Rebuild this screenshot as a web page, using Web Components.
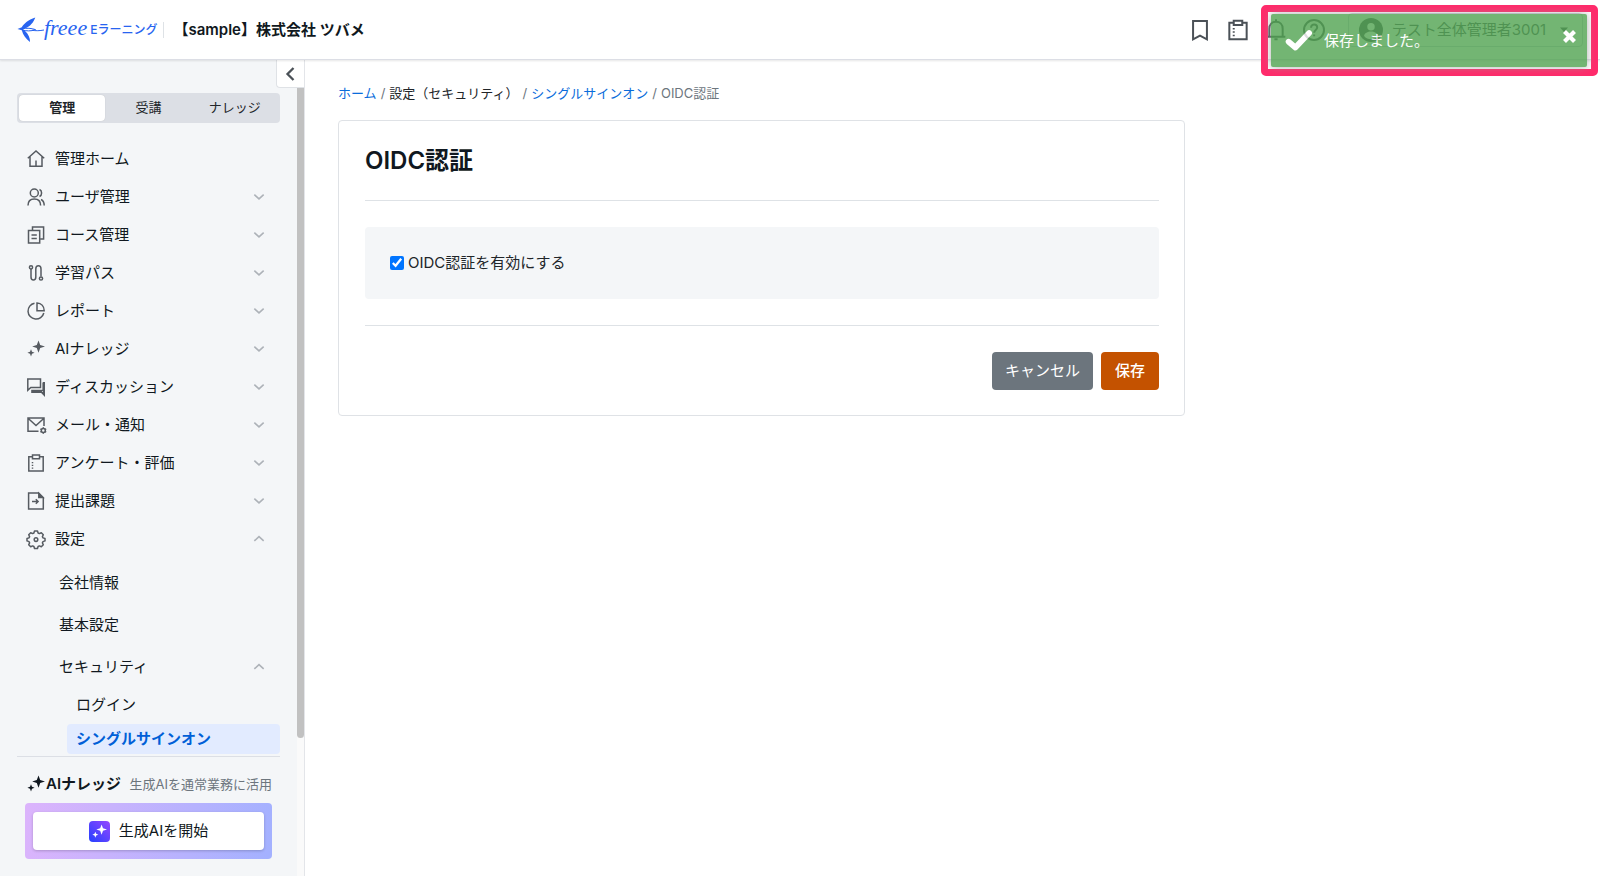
<!DOCTYPE html>
<html lang="ja">
<head>
<meta charset="utf-8">
<meta name="viewport" content="width=device-width, initial-scale=1">
<title>OIDC認証 | freee Eラーニング</title>
<style>
    * { box-sizing: border-box; }
    html, body { height: 100%; margin: 0; }
    body {
        font-family: Inter, "Noto Sans CJK JP", sans-serif;
        font-size: 15px;
        line-height: 22px;
        color: #212529;
        background: #fff;
    }
</style>
</head>
<body>
<app-layout>
    <app-header slot="header" company="【sample】株式会社 ツバメ" user="テスト全体管理者3001"></app-header>

    <side-bar slot="side">
        <mode-tabs slot="top"></mode-tabs>
        <nav-item icon="home" link>管理ホーム</nav-item>
        <nav-item icon="users">ユーザ管理</nav-item>
        <nav-item icon="copy">コース管理</nav-item>
        <nav-item icon="path">学習パス</nav-item>
        <nav-item icon="pie">レポート</nav-item>
        <nav-item icon="sparkle">AIナレッジ</nav-item>
        <nav-item icon="chat">ディスカッション</nav-item>
        <nav-item icon="mail">メール・通知</nav-item>
        <nav-item icon="clipboard">アンケート・評価</nav-item>
        <nav-item icon="submit">提出課題</nav-item>
        <nav-item icon="gear" open>設定</nav-item>
        <nav-item level="2" link>会社情報</nav-item>
        <nav-item level="2" link>基本設定</nav-item>
        <nav-item level="2" open>セキュリティ</nav-item>
        <nav-item level="3" link>ログイン</nav-item>
        <nav-item level="3" link current>シングルサインオン</nav-item>
        <ai-promo slot="bottom"></ai-promo>
    </side-bar>

    <bread-crumb>
        <crumb-item href="#home">ホーム</crumb-item>
        <crumb-item>設定（セキュリティ）</crumb-item>
        <crumb-item href="#sso">シングルサインオン</crumb-item>
        <crumb-item last>OIDC認証</crumb-item>
    </bread-crumb>
    <form-card heading="OIDC認証">
        <check-field>OIDC認証を有効にする</check-field>
        <action-button slot="actions">キャンセル</action-button>
        <action-button slot="actions" primary>保存</action-button>
    </form-card>
</app-layout>
<highlight-frame>
    <toast-message>保存しました。</toast-message>
</highlight-frame>

<script>
// All icons share an 18 x 18 grid
const ICONS = {
    home: '<path d="M.8 8.300 9 1l8.200 7.300M3 6.500V16.300H15V6.500M9 16V10.500"/>',
    users: '<circle cx="7.300" cy="5" r="4"/><path d="M1 17.500c0-4 2.500-6.500 6.300-6.500s6.300 2.500 6.300 6.500M12.500 1.500c2.800 1 2.800 5.800 0 7M14 11.500c2 1 3.200 3 3.200 6"/>',
    copy: '<path d="M5.500 3.800V1H16.600V13H13.500M1.500 4.400H12.700V17H1.500zM4.500 9H9.800M4.500 12.500H9.800"/>',
    path: '<circle cx="4" cy="3.300" r="1.600"/><path d="M4 5v8c0 4 4.800 4 4.800 0V5c0-4.300 5.200-4.300 5.200 0v7.500"/><circle cx="14" cy="14.500" r="1.600"/>',
    pie: '<path d="M7.500 1.200A8 8 0 1 0 16.800 11"/><path d="M10 1v7.800h7.200C17.200 4.200 14.200 1.200 10 1z"/>',
    sparkle: '<g fill="currentColor" stroke="none"><path d="M11.500.5l1.700 4.500L18 6.500 13.200 8l-1.700 4.800L9.800 8 5.200 6.500 9.800 5z"/><path d="M4 9.300l1 2.500 2.600 1-2.600 1-1 2.600-1-2.600-2.600-1 2.600-1z"/></g>',
    chat: '<path d="M.8 1h12.700v8.500H3.800L.8 12.200z"/><path d="M17 4v12.500l-2.600-2.600H4.200" stroke-width="2"/><path d="M4.200 12.300H16V4.500" stroke-width="1.200"/>',
    mail: '<path d="M11.500 15.300H1V2H17v8M1.300 2.500 9 9.500l7.700-7"/><circle cx="16.300" cy="14.500" r="2"/><path d="M16.300 11.200v1.300M16.300 16.500v1.300M13.400 12.900l1.200.6M18 15.500l1.200.6M13.400 16.100l1.200-.6M18 13.500l1.200-.6"/>',
    clipboard: '<path d="M5.500 2.800H1.800V17H16.200V2.800H12.500M5.500 1h7v3.800h-7z"/><path d="M5.500 8v1.300M5.500 10.800v1.300M5.500 13.500v1.300"/>',
    submit: '<path d="M1.600 1H11.500l4.800 4.800V17H1.600z"/><path d="M11.800 1.300v4.200h4.200z" fill="currentColor"/><path d="M5 9.500h6M8.800 7.300l2.300 2.200-2.300 2.200"/>',
    gear: '<path d="M7.500 1h3l.6 2 1.300.6 1.900-.9 2 2-.9 1.900.6 1.300 2 .6v2.400l-2 .7-.6 1.300.9 1.900-2 2-1.900-.9-1.300.6-.6 1.900h-3l-.6-1.900-1.300-.6-1.900.9-2-2 .9-1.900-.6-1.300-2-.7V8.500l2-.6.6-1.300-.9-1.900 2-2 1.900.9L6.900 3z" stroke-linejoin="round"/><circle cx="9" cy="9.600" r="1.800"/>',
    bookmark: '<path d="M3.800 2.200H14.200V16L9 13.300 3.800 16z"/>',
    board: '<path d="M5.800 3.500H2.500V16H15.500V3.500H12.200M5.800 2h6.400v3.200H5.800z"/><path d="M5.800 7.500v1.100M5.800 10v1.100M5.800 12.500v1.100"/>',
    bell: '<path d="M2 14h14M4 14V8c0-3.200 2-5.200 5-5.200s5 2 5 5.200v6M9 1v1.500M7.800 16h2.400"/>',
    help: '<circle cx="9" cy="9" r="7.500"/><path d="M6.800 7.300c0-3.300 4.600-3 4.600-.2 0 1.800-2.300 2-2.300 4M9.100 12.300v1.300"/>',
    user: '<g stroke="none"><circle cx="9" cy="9" r="9" fill="currentColor"/><circle cx="9" cy="6.500" r="2.800" fill="#fff"/><path d="M3.800 13.500c.5-4.500 9.900-4.500 10.400 0-2.500 3.300-7.900 3.300-10.400 0z" fill="#fff"/></g>',
    down: '<path d="M3 6l6 5.500L15 6" stroke-width="2"/>',
    up: '<path d="M3 11.500 9 6l6 5.500" stroke-width="2"/>',
    back: '<path d="M11.500 3 5.500 9l6 6" stroke-width="2.300"/>',
    caret: '<path d="M5 6.500h8L9 11z" fill="currentColor" stroke="none"/>',
    check: '<path d="M1.800 9.500 6.500 13.500 16 3.500" stroke-width="4" stroke-linecap="round" stroke-linejoin="round"/>',
    close: '<path d="M3 3l12 12M15 3 3 15" stroke-width="5"/>'
};

function define(name, render) {
    customElements.define(name, class extends HTMLElement {
        constructor() {
            super();
            this.attachShadow({ mode: 'open' });
        }
        connectedCallback() {
            this.shadowRoot.innerHTML = '<style>*{box-sizing:border-box}:host{box-sizing:border-box}</style>' + render(this);
        }
    });
}

define('ui-icon', el => `
    <style>
        :host { display: block; flex: none; width: 18px; height: 18px; }
        svg { display: block; width: 100%; height: 100%; overflow: visible; }
    </style>
    <svg viewBox="0 0 18 18" fill="none" stroke="currentColor" stroke-width="1.5" aria-hidden="true">${ICONS[el.getAttribute('name')]}</svg>
`);

define('app-layout', () => `
    <style>
        :host { display: flex; flex-direction: column; height: 100vh; }
        .body { display: flex; flex: 1; min-height: 0; }
        main { flex: 1; min-width: 0; padding: 22px 32px 32px 33px; overflow: auto; }
    </style>
    <slot name="header"></slot>
    <div class="body">
        <slot name="side"></slot>
        <main><slot></slot></main>
    </div>
`);

define('brand-logo', () => `
    <style>
        :host { display: block; }
        a { display: flex; align-items: center; color: #2864f0; text-decoration: none; }
        svg { width: 27px; height: 26px; }
        .name { font: italic 22px/26px "Liberation Serif", serif; padding-bottom: 4px; }
        .product { font-size: 12px; line-height: 20px; font-weight: 500; margin-left: 3px; }
    </style>
    <a href="#top">
        <svg viewBox="0 0 27 26" fill="currentColor" aria-hidden="true">
            <path d="M18.300.5C11 3 6.500 7 4.800 10.300L.5 12l4.300 1.300C6 18 9 22 13 25c.2-4-1.500-8-5.200-11.300L6 12.300l2.500-1C13 9.500 16.500 5.500 18.300.5z"/>
            <path d="M5 12c5-1.300 9-.8 13.500.6C14 14.500 9 14 5 13M15 13.200c3.500.8 8 .6 12-.2" fill="none" stroke="currentColor" stroke-width="1"/>
        </svg>
        <span class="name">freee</span>
        <span class="product">Eラーニング</span>
    </a>
`);

define('app-header', el => `
    <style>
        :host {
            display: flex;
            align-items: center;
            flex: none;
            height: 60px;
            padding: 0 17px;
            background: #fff;
            border-bottom: 1px solid #dcdee5;
            box-shadow: 0 1px 2px rgba(0, 0, 0, .1);
            z-index: 1;
        }
        .company {
            border-left: 1px solid #dee2e6;
            margin-left: 6px;
            padding-left: 9px;
            line-height: 16px;
            font-weight: 600;
            color: #101820;
            white-space: nowrap;
        }
        .tools { display: flex; align-items: center; gap: 14px; margin-left: auto; color: #4b5157; }
        button { background: none; border: 0; padding: 0; font: inherit; color: inherit; }
        ui-icon { width: 24px; height: 24px; }
        .user {
            display: flex;
            align-items: center;
            gap: 9px;
            height: 34px;
            margin-left: 8px;
            padding: 0 9px 0 10px;
            border: 1px solid #ced4da;
            border-radius: 4px;
            white-space: nowrap;
        }
        .user ui-icon:last-child { width: 18px; height: 18px; }
    </style>
    <brand-logo></brand-logo>
    <div class="company">${el.getAttribute('company')}</div>
    <div class="tools">
        <button aria-label="ブックマーク"><ui-icon name="bookmark"></ui-icon></button>
        <button aria-label="アンケート"><ui-icon name="board"></ui-icon></button>
        <button aria-label="お知らせ"><ui-icon name="bell"></ui-icon></button>
        <button aria-label="ヘルプ"><ui-icon name="help"></ui-icon></button>
        <button class="user"><ui-icon name="user"></ui-icon>${el.getAttribute('user')}<ui-icon name="caret"></ui-icon></button>
    </div>
`);

define('side-bar', () => `
    <style>
        :host {
            display: flex;
            flex: none;
            width: 305px;
            background: #f4f6f8;
            border-right: 1px solid #e3e5e9;
        }
        .content { display: flex; flex-direction: column; flex: 1; min-width: 0; padding: 33px 0 17px 17px; }
        nav { flex: 1; min-height: 0; margin-top: 17px; overflow: hidden; }
        .rail { display: flex; flex-direction: column; align-items: flex-end; width: 24px; background: linear-gradient(to right, transparent 17px, #fafafa 17px); }
        button {
            width: 28px;
            height: 28px;
            padding: 5px;
            background: #fff;
            border: 1px solid #dfe2e6;
            border-width: 0 0 1px 1px;
            border-radius: 0 0 0 4px;
            color: #4b5157;
        }
        .thumb { width: 7px; height: 650px; max-height: 80%; background: #c1c1c1; border-radius: 0 0 4px 4px; }
    </style>
    <div class="content">
        <slot name="top"></slot>
        <nav><slot></slot></nav>
        <slot name="bottom"></slot>
    </div>
    <div class="rail">
        <button aria-label="メニューを閉じる"><ui-icon name="back"></ui-icon></button>
        <div class="thumb"></div>
    </div>
`);

define('mode-tabs', () => `
    <style>
        :host { display: flex; padding: 2px; background: #dcdfe5; border-radius: 4px; }
        button {
            flex: 1;
            height: 26px;
            padding: 0 0 2px;
            background: none;
            border: 0;
            border-radius: 4px;
            font: inherit;
            font-size: 13px;
            color: #212529;
        }
        button[aria-pressed="true"] { background: #fff; font-weight: 600; box-shadow: 0 0 1px rgba(0, 0, 0, .2); }
    </style>
    <button aria-pressed="true">管理</button>
    <button>受講</button>
    <button>ナレッジ</button>
`);

define('nav-item', el => {
    const tag = el.hasAttribute('link') ? 'a href="#"' : 'button';
    const end = el.hasAttribute('link') ? 'a' : 'button';
    const icon = el.getAttribute('icon');
    const open = el.hasAttribute('open');
    return `
    <style>
        :host { display: block; }
        a, button {
            display: flex;
            align-items: center;
            gap: 10px;
            width: 100%;
            height: 38px;
            padding: 0 14px 0 10px;
            background: none;
            border: 0;
            border-radius: 4px;
            font: inherit;
            color: #101820;
            text-align: left;
            text-decoration: none;
        }
        span { flex: 1; white-space: nowrap; }
        .icon { color: #565b61; }
        .arrow { width: 14px; height: 14px; color: #adb2b8; }
        :host([open][icon]) { margin-bottom: 4px; }
        :host([level="2"]) a, :host([level="2"]) button { height: 42px; padding-left: 42px; }
        :host([level="3"]) { padding: 2px 0 2px 50px; }
        :host([level="3"]) a { height: 30px; padding-left: 9px; }
        :host([current]) a { background: #e2ebff; color: #005fd7; font-weight: 600; }
    </style>
    <${tag}>
        ${icon ? `<ui-icon class="icon" name="${icon}"></ui-icon>` : ''}
        <span><slot></slot></span>
        ${end === 'button' ? `<ui-icon class="arrow" name="${open ? 'up' : 'down'}"></ui-icon>` : ''}
    </${end}>`;
});

define('ai-promo', () => `
    <style>
        :host { display: block; border-top: 1px solid #dcdfe5; padding: 16px 8px 0; }
        .title { display: flex; align-items: center; gap: 1px; color: #101820; white-space: nowrap; }
        .title > ui-icon { margin-left: 2px; }
        strong { font-weight: 600; }
        small { margin-left: auto; font-size: 13px; color: #6c757d; }
        .frame {
            margin-top: 8px;
            padding: 9px 8px;
            background: linear-gradient(100deg, #dcb4fc, #a3b1ff);
            border-radius: 4px;
        }
        button {
            display: flex;
            align-items: center;
            justify-content: center;
            gap: 9px;
            width: 100%;
            height: 38px;
            background: #fff;
            border: 0;
            border-radius: 4px;
            box-shadow: 0 1px 3px rgba(0, 0, 0, .2);
            font: inherit;
            color: #101820;
        }
        .badge { padding: 3px; border-radius: 4px; background: linear-gradient(45deg, #2340ff, #9747ff); color: #fff; }
        .badge ui-icon { width: 15px; height: 15px; }
    </style>
    <div class="title"><ui-icon name="sparkle"></ui-icon><strong>AIナレッジ</strong><small>生成AIを通常業務に活用</small></div>
    <div class="frame"><button><span class="badge"><ui-icon name="sparkle"></ui-icon></span>生成AIを開始</button></div>
`);

define('bread-crumb', () => `
    <style>
        :host { display: flex; font-size: 13px; line-height: 22px; white-space: nowrap; }
    </style>
    <slot></slot>
`);

define('crumb-item', el => {
    const href = el.getAttribute('href');
    return `
    <style>
        :host { display: block; }
        :host([last]) { color: #6c757d; }
        :host(:not([last]))::after { content: "/"; padding: 0 4px; color: #6c757d; }
        a { color: #0a6cdb; text-decoration: none; }
    </style>
    ${href ? `<a href="${href}"><slot></slot></a>` : '<slot></slot>'}`;
});

define('form-card', el => `
    <style>
        :host {
            display: block;
            max-width: 847px;
            margin-top: 16px;
            padding: 26px 25px 25px 26px;
            background: #fff;
            border: 1px solid #dfe2e6;
            border-radius: 4px;
        }
        h1 { margin: 0; padding-bottom: 26px; font-size: 24px; line-height: 27px; font-weight: 600; color: #101820; }
        .fields { padding: 26px 0; border: 1px solid #dee2e6; border-width: 1px 0; }
        .actions { display: flex; justify-content: flex-end; gap: 8px; padding-top: 26px; }
    </style>
    <h1>${el.getAttribute('heading')}</h1>
    <div class="fields"><slot></slot></div>
    <div class="actions"><slot name="actions"></slot></div>
`);

define('check-field', () => `
    <style>
        :host { display: block; padding: 25px; background: #f4f6f8; border-radius: 4px; }
        label { display: flex; align-items: center; gap: 4px; }
        input { width: 14px; height: 14px; margin: 0; accent-color: #0075ff; }
    </style>
    <label><input type="checkbox" checked><slot></slot></label>
`);

define('action-button', () => `
    <style>
        :host { display: block; }
        button {
            height: 38px;
            padding: 0 13px;
            background: #6c757d;
            border: 0;
            border-radius: 4px;
            font: inherit;
            color: #fff;
        }
        :host([primary]) button { padding: 0 14px; background: #c45200; font-weight: 500; }
    </style>
    <button><slot></slot></button>
`);

define('highlight-frame', () => `
    <style>
        :host {
            position: absolute;
            top: 5px;
            right: 2px;
            z-index: 2;
            width: 337px;
            padding: 2px 4px 2px 3px;
            border: 7px solid #ff2b6b;
            border-radius: 5px;
        }
    </style>
    <slot></slot>
`);

define('toast-message', () => `
    <style>
        :host {
            display: flex;
            align-items: center;
            gap: 12px;
            height: 53px;
            padding: 0 10px 0 15px;
            background: #51a351;
            border-radius: 2px;
            box-shadow: 0 0 8px #999;
            color: #fff;
            opacity: .8;
        }
        ui-icon { width: 26px; height: 26px; }
        span { flex: 1; }
        button { align-self: flex-start; margin-top: 15px; padding: 0; background: none; border: 0; color: #fff; }
        button ui-icon { width: 15px; height: 15px; }
    </style>
    <ui-icon name="check"></ui-icon>
    <span role="status"><slot></slot></span>
    <button aria-label="閉じる"><ui-icon name="close"></ui-icon></button>
`);
</script>
</body>
</html>
